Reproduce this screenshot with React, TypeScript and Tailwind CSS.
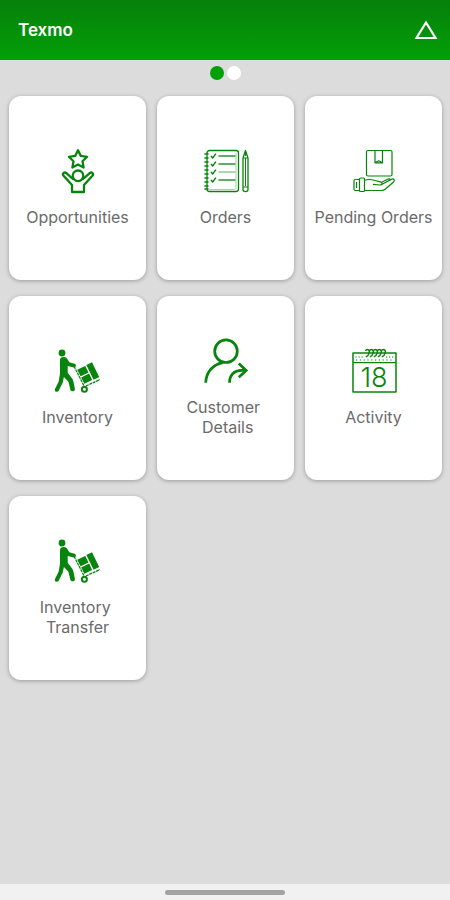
import React from 'react';

type IconProps = { children: React.ReactNode };

type Tile = {
  label: string;
  icon: React.ReactNode;
};

function Icon({ children }: IconProps) {
  return (
    <svg
      className="size-11 overflow-visible text-[#07840c]"
      viewBox="0 0 44 44"
      fill="none"
      stroke="currentColor"
      strokeLinejoin="round"
      aria-hidden="true"
    >
      {children}
    </svg>
  );
}

function OpportunitiesIcon() {
  return (
    <Icon>
      <g strokeWidth="2.3">
        <path d="M22 1.2l2.8 5.7 6.3.9-4.6 4.5 1.1 6.2-5.6-2.9-5.6 2.9 1.1-6.2-4.6-4.5 6.3-.9z" />
        <circle cx="22" cy="26.8" r="5.3" />
        <path d="M17.5 30.5l-7.2-6.4c-2-1.7-4.4.6-2.7 2.7l8.4 9.2V43h12v-7l8.4-9.2c1.7-2.1-.7-4.4-2.7-2.7l-7.2 6.4" />
      </g>
    </Icon>
  );
}

function OrdersIcon() {
  return (
    <Icon>
      <rect x="3" y="1.5" width="31.5" height="41" rx="2.5" strokeWidth="1.3" />
      <path d="M32 4v36M5 40.5h26" strokeWidth=".6" opacity=".6" />
      {[5, 9, 13, 17, 21, 25, 29, 33, 37, 40].map((y) => (
        <path key={y} d={`M1 ${y}h3`} strokeWidth="1.6" strokeLinecap="round" />
      ))}
      {[7, 15, 23, 31].map((y) => (
        <g key={y}>
          <path d={`M7 ${y}l1.6 2 3.4-4.4`} strokeWidth="1.4" />
          <path d={`M14.5 ${y}h17`} strokeWidth="1.3" opacity={y === 23 ? 0.5 : 1} />
        </g>
      ))}
      <path d="M41.5 1.5L39 9v31.5c0 2.7 5 2.7 5 0V9z" strokeWidth="1.3" />
      <path d="M39 9h5M41.5 9v28M39 38h5M41.5 2v5" strokeWidth="1" />
    </Icon>
  );
}

function PendingOrdersIcon() {
  return (
    <Icon>
      <g strokeWidth="1.2">
        <rect x="14.5" y="1.5" width="25.5" height="25.5" rx="1.5" />
        <path d="M23 1.5v12.3h7.5V1.5M23 13.8l3.7-2 3.8 2" />
        <path d="M7.5 30.5H3.2c-.8 0-1.2.5-1.2 1.2v8.6c0 .8.4 1.2 1.2 1.2h4.3" />
        <rect x="7.5" y="29" width="5" height="13.5" rx="1" />
        <path d="M12.5 31.2c4-1.2 7.2-.8 10.5.3l5.5 1.3c2.4.7 2 3.4-.6 3.2L21 35.4" />
        <path d="M28.7 36l10.5-5.6c2.4-1.2 4.1.6 2.3 2.6l-8.3 7.2c-1.2 1-2.3 1.3-3.8 1.3H12.5" />
        <path d="M29.5 33.2l6.2-2.9c1.1-.5 2.3-.4 2.7.4M4.5 33v6" />
      </g>
    </Icon>
  );
}

function InventoryIcon() {
  return (
    <Icon>
      <g fill="currentColor" stroke="none">
        <circle cx="6" cy="4" r="3.4" />
        <path d="M5 8.2c2.2-.5 4 .3 4.8 1.8l1.9 3.2 5.2 1.6c2.2.7 1.7 4-.6 3.6l-6.2-1.5v6.8l4.4 5.7c.8 1 1 1.8 1.3 3l1.5 7.4c.4 2.9-3.7 3.5-4.5.9l-2-7.9-4.5-4.8-1 4.8c-.2 1-.4 1.4-1 2.4L1.1 41.8c-1.3 2.2-5 .6-3.7-1.9l3.7-7.4 1.3-8.3V11c0-1.5 1-2.5 2.6-2.8z" transform="translate(1.6)" />
        <path d="M21.2 20.8l8-3.9 3.3 6.5-7.9 3.9zM25.2 28.5l7.9-3.9 3 6.3-7.7 3.9z" />
        <path d="M30.4 16l5.6-2.8 7.2 14.7-5.6 2.8z" />
      </g>
      <path d="M18 17.2l10.2 20" strokeWidth="1.2" strokeDasharray="3 .7" />
      <path d="M30 37L44 30.6" strokeWidth="1.3" strokeDasharray="3 .7" />
      <circle cx="28.4" cy="40.2" r="2.5" strokeWidth="2" />
    </Icon>
  );
}

function CustomerIcon() {
  return (
    <Icon>
      <g strokeWidth="2.7">
        <circle cx="22" cy="12.2" r="11.3" />
        <path d="M1.7 43.8c.4-10 6.6-18.2 17-20.2" />
        <path d="M25.5 43.8c0-7.6 4.5-12.4 12-12.4h4" />
        <path d="M34.8 24.5l7.4 6.9-7.4 6.9" strokeLinejoin="miter" />
      </g>
    </Icon>
  );
}

function ActivityIcon() {
  return (
    <Icon>
      <rect x="1" y="4" width="43" height="39" strokeWidth="1.5" />
      <path d="M1 13.7h43" strokeWidth="1.3" />
      <path d="M3.5 8h8M34 8h8" strokeWidth="1" strokeDasharray="1.2 1.8" />
      <path d="M4 11h37" strokeWidth="1.2" strokeDasharray="1.2 2.6" />
      {[15, 19, 23, 27, 31].map((x) => (
        <path
          key={x}
          d={`M${x - 1.5} 2c1-2.5 4.5-1.4 3.8 1.6-.4 2-1.7 3.5-3.5 4.2`}
          strokeWidth="1.4"
        />
      ))}
      <text
        x="22"
        y="38"
        textAnchor="middle"
        fill="currentColor"
        stroke="none"
        className="font-['Inter',sans-serif] text-[27px] font-light"
      >
        18
      </text>
    </Icon>
  );
}

const tiles: Tile[] = [
  { label: 'Opportunities', icon: <OpportunitiesIcon /> },
  { label: 'Orders', icon: <OrdersIcon /> },
  { label: 'Pending Orders', icon: <PendingOrdersIcon /> },
  { label: 'Inventory', icon: <InventoryIcon /> },
  { label: 'Customer \n Details', icon: <CustomerIcon /> },
  { label: 'Activity', icon: <ActivityIcon /> },
  { label: 'Inventory \nTransfer', icon: <InventoryIcon /> }
];

function App() {
  return (
    <div className="flex min-h-screen flex-col bg-[#dcdcdc] font-['Inter',sans-serif]">
      <header className="flex h-15 items-center justify-between bg-linear-to-b from-[#06800a] to-[#02a008] pr-3 pl-[18px] text-white">
        <h1 className="text-[17px] leading-6 font-semibold">Texmo</h1>
        <button type="button" aria-label="Alerts">
          <svg className="h-5 w-6" viewBox="0 0 24 20" fill="none" stroke="currentColor" aria-hidden="true">
            <path d="M12 2.5L21.5 18h-19z" strokeWidth="2.2" />
          </svg>
        </button>
      </header>

      <main className="grow">
        <div className="flex justify-center gap-[3px] pt-1.5 pb-4">
          <span className="size-3.5 rounded-full bg-[#02a008]" />
          <span className="size-3.5 rounded-full bg-white" />
        </div>
        <nav className="grid grid-cols-3 gap-x-[11px] gap-y-4 pr-2 pl-[9px]">
          {tiles.map(({ label, icon }) => (
            <button
              key={label}
              type="button"
              className="flex h-46 flex-col items-center justify-center gap-3.5 rounded-xl bg-white shadow-[0_1px_4px_rgba(0,0,0,0.3)]"
            >
              {icon}
              <span className="text-center text-base leading-5 whitespace-pre text-[#6b6b6b]">{label}</span>
            </button>
          ))}
        </nav>
      </main>

      <footer className="flex h-4 items-center justify-center bg-[#f1f1f1]">
        <div className="h-[5px] w-30 rounded-full bg-[#a3a3a3]" />
      </footer>
    </div>
  );
}

export default App;
